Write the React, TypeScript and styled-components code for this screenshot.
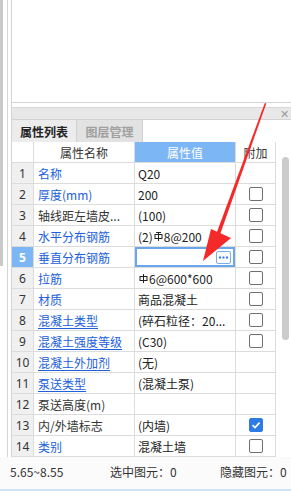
import React from "react";
import styled, { createGlobalStyle } from "styled-components";

const GlobalStyle = createGlobalStyle`
  html, body {
    margin: 0;
    padding: 0;
    background: #ffffff;
  }
  body {
    width: 291px;
    height: 491px;
    overflow: hidden;
    font-family: "Noto Sans CJK SC", "Microsoft YaHei", sans-serif;
    font-size: 12px;
    color: #333333;
  }
  * {
    box-sizing: border-box;
  }
`;

const Page = styled.div`
  position: relative;
  width: 291px;
  height: 491px;
  display: flex;
  flex-direction: column;
`;

const Body = styled.div`
  display: flex;
  height: 457px;
`;

const Gutter = styled.div`
  width: 12px;
  display: flex;
  align-items: flex-start;
`;

const Strip = styled.div`
  width: 3px;
  height: 266px;
  background: #cacaca;
`;

const GutterLine = styled.div`
  margin-left: 4px;
  width: 1px;
  height: 457px;
  background: #d4d4d4;
`;

const Main = styled.div`
  flex: 1;
  display: flex;
  flex-direction: column;
  border-left: 1px solid #d4d4d4;
`;

const TopPanel = styled.div`
  height: 103px;
  border-bottom: 1px solid #d4d4d4;
  background: #ffffff;
`;

const PanelBar = styled.div`
  margin-top: 4px;
  height: 12px;
  background: #e8e8e8;
  border-top: 1px solid #d8d8d8;
  display: flex;
  justify-content: flex-end;
  align-items: center;
  padding-right: 2px;
  color: #9a9a9a;
  font-size: 11px;
  line-height: 1;
`;

const Tabs = styled.div`
  height: 23px;
  display: flex;
  border-top: 1px solid #d4d4d4;
  background: #ffffff;
`;

const Tab = styled.div<{ $active?: boolean }>`
  width: ${(p) => (p.$active ? 65 : 66)}px;
  display: flex;
  align-items: center;
  justify-content: center;
  font-weight: bold;
  font-size: 12px;
  background: ${(p) => (p.$active ? "#ececec" : "#e2e2e2")};
  color: ${(p) => (p.$active ? "#222222" : "#a0a0a0")};
  border-right: 1px solid #d0d0d0;
`;

const TableArea = styled.div`
  display: flex;
  flex: 1;
`;

const Table = styled.div`
  display: grid;
  grid-template-columns: 22px 101px 101px 40px;
  grid-auto-rows: 21px;
  width: 264px;
  align-content: start;
`;

const Cell = styled.div`
  border-right: 1px solid #dcdcdc;
  border-bottom: 1px solid #dcdcdc;
  display: flex;
  align-items: center;
  white-space: nowrap;
  overflow: hidden;
`;

const HeadCell = styled(Cell)<{ $blue?: boolean }>`
  justify-content: center;
  background: ${(p) => (p.$blue ? "#7db6f4" : "#ffffff")};
  color: ${(p) => (p.$blue ? "#ffffff" : "#333333")};
  font-size: 12px;
`;

const NumCell = styled(Cell)<{ $sel?: boolean }>`
  justify-content: center;
  background: ${(p) => (p.$sel ? "#7db6f4" : "#f0f0f0")};
  color: ${(p) => (p.$sel ? "#ffffff" : "#333333")};
  font-weight: ${(p) => (p.$sel ? "bold" : "normal")};
  font-family: "Noto Sans", sans-serif;
  font-size: 12px;
`;

const NameCell = styled(Cell)<{ $blue?: boolean; $under?: boolean }>`
  padding-left: 4px;
  color: ${(p) => (p.$blue ? "#2160dc" : "#333333")};
  text-decoration: ${(p) => (p.$under ? "underline" : "none")};
  text-underline-offset: 2px;
`;

const ValueCell = styled(Cell)`
  padding-left: 3px;
  color: #222222;
`;

const EditCell = styled(Cell)`
  padding: 0;
`;

const Editor = styled.div`
  width: 100%;
  height: 100%;
  border: 2px solid #6aa6ec;
  display: flex;
  align-items: center;
  justify-content: flex-end;
  padding-right: 2px;
`;

const MoreButton = styled.div`
  width: 15px;
  height: 13px;
  border: 1px solid #7aaeea;
  border-radius: 2px;
  display: flex;
  align-items: center;
  justify-content: center;
`;

const CheckCell = styled(Cell)`
  justify-content: center;
`;

const Check = styled.div<{ $on?: boolean }>`
  width: 14px;
  height: 14px;
  border-radius: 2px;
  border: 1px solid ${(p) => (p.$on ? "#2f7be6" : "#6f6f6f")};
  background: ${(p) => (p.$on ? "#2f7be6" : "#ffffff")};
  display: flex;
  align-items: center;
  justify-content: center;
`;

const ScrollTrack = styled.div`
  width: 15px;
  background: #ffffff;
  padding: 15px 2px 0 6px;
`;

const Thumb = styled.div`
  height: 183px;
  border-radius: 4px;
  background: #cbcbcb;
`;

const StatusBar = styled.div`
  height: 34px;
  display: flex;
  align-items: center;
  padding: 0 0 4px 10px;
  background: #fbfbfb;
  border-bottom: 2px solid #cfe3f6;
  color: #333333;
  font-size: 12px;
`;

const StatusItem = styled.span<{ $w: number }>`
  width: ${(p) => p.$w}px;
  white-space: nowrap;
`;

const Overlay = styled.svg`
  position: absolute;
  left: 0;
  top: 0;
  pointer-events: none;
`;

const SymbolIcon = ({ bar }: { bar?: boolean }) => (
  <svg width="9" height="11" viewBox="0 0 9 11" style={{ margin: "0 1px" }}>
    <rect x="1" y="3.5" width="7" height="4" fill="none" stroke="#222" strokeWidth="1" />
    <line x1="4.5" y1={bar ? 1.5 : 1} x2="4.5" y2="10" stroke="#222" strokeWidth="1" />
    {bar && <line x1="2" y1="1.5" x2="7" y2="1.5" stroke="#222" strokeWidth="1" />}
  </svg>
);

type Row = {
  name: string;
  blue?: boolean;
  under?: boolean;
  value: React.ReactNode;
  check?: "on" | "off";
  edit?: boolean;
};

const rows: Row[] = [
  { name: "名称", blue: true, value: "Q20" },
  { name: "厚度(mm)", blue: true, value: "200", check: "off" },
  { name: "轴线距左墙皮...", value: "(100)", check: "off" },
  {
    name: "水平分布钢筋",
    blue: true,
    value: (
      <>
        (2)
        <SymbolIcon bar />
        8@200
      </>
    ),
    check: "off",
  },
  { name: "垂直分布钢筋", blue: true, value: "", check: "off", edit: true },
  {
    name: "拉筋",
    blue: true,
    value: (
      <>
        <SymbolIcon />
        6@600*600
      </>
    ),
    check: "off",
  },
  { name: "材质", blue: true, value: "商品混凝土", check: "off" },
  { name: "混凝土类型", blue: true, under: true, value: "(碎石粒径：20...", check: "off" },
  { name: "混凝土强度等级", blue: true, under: true, value: "(C30)", check: "off" },
  { name: "混凝土外加剂", blue: true, under: true, value: "(无)" },
  { name: "泵送类型", blue: true, under: true, value: "(混凝土泵)" },
  { name: "泵送高度(m)", value: "" },
  { name: "内/外墙标志", value: "(内墙)", check: "on" },
  { name: "类别", blue: true, value: "混凝土墙", check: "off" },
];

export default function App() {
  return (
    <Page>
      <GlobalStyle />
      <Body>
        <Gutter>
          <Strip />
          <GutterLine />
        </Gutter>
        <Main>
          <TopPanel />
          <PanelBar>✕</PanelBar>
          <Tabs>
            <Tab $active>属性列表</Tab>
            <Tab>图层管理</Tab>
          </Tabs>
          <TableArea>
            <Table>
              <HeadCell />
              <HeadCell>属性名称</HeadCell>
              <HeadCell $blue>属性值</HeadCell>
              <HeadCell>附加</HeadCell>
              {rows.map((r, i) => (
                <React.Fragment key={i}>
                  <NumCell $sel={r.edit}>{i + 1}</NumCell>
                  <NameCell $blue={r.blue} $under={r.under}>
                    {r.name}
                  </NameCell>
                  {r.edit ? (
                    <EditCell>
                      <Editor>
                        <MoreButton>
                          <svg width="9" height="3" viewBox="0 0 9 3">
                            <rect x="0" y="0.5" width="2" height="2" fill="#2f78dc" />
                            <rect x="3.5" y="0.5" width="2" height="2" fill="#2f78dc" />
                            <rect x="7" y="0.5" width="2" height="2" fill="#2f78dc" />
                          </svg>
                        </MoreButton>
                      </Editor>
                    </EditCell>
                  ) : (
                    <ValueCell>{r.value}</ValueCell>
                  )}
                  <CheckCell>
                    {r.check && (
                      <Check $on={r.check === "on"}>
                        {r.check === "on" && (
                          <svg width="10" height="10" viewBox="0 0 10 10">
                            <path d="M1.5 5.2 L4 7.6 L8.6 2.6" fill="none" stroke="#fff" strokeWidth="1.6" />
                          </svg>
                        )}
                      </Check>
                    )}
                  </CheckCell>
                </React.Fragment>
              ))}
            </Table>
            <ScrollTrack>
              <Thumb />
            </ScrollTrack>
          </TableArea>
        </Main>
      </Body>
      <StatusBar>
        <StatusItem $w={100}>5.65~8.55</StatusItem>
        <StatusItem $w={110}>选中图元：0</StatusItem>
        <StatusItem $w={70}>隐藏图元：0</StatusItem>
      </StatusBar>
      <Overlay width="291" height="491" viewBox="0 0 291 491">
        <polygon points="264.8,103 266.3,103.6 219.5,236 216,234.5" fill="#f42a2a" />
        <polygon points="211,229 231,238 203,261" fill="#f42a2a" />
      </Overlay>
    </Page>
  );
}
